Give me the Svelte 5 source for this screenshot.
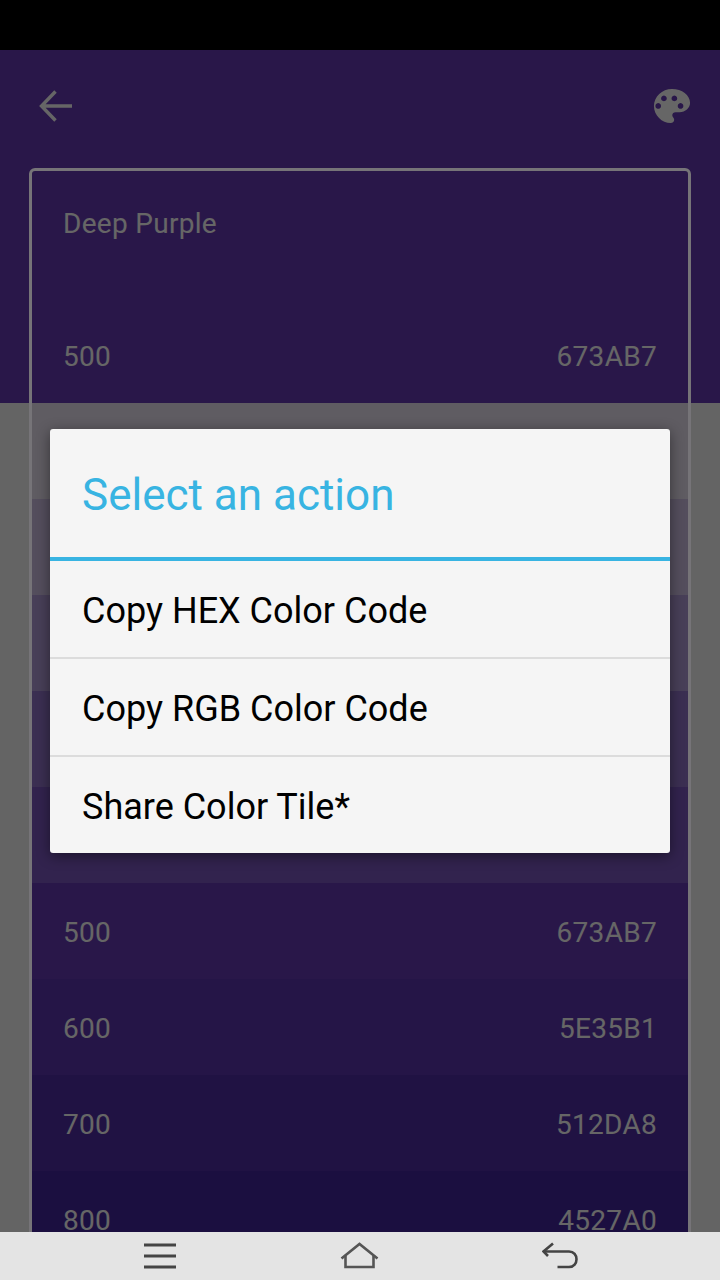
<script>
  const shades = [
    { name: "50", hex: "EDE7F6" },
    { name: "100", hex: "D1C4E9" },
    { name: "200", hex: "B39DDB" },
    { name: "300", hex: "9575CD" },
    { name: "400", hex: "7E57C2" },
    { name: "500", hex: "673AB7" },
    { name: "600", hex: "5E35B1" },
    { name: "700", hex: "512DA8" },
    { name: "800", hex: "4527A0" },
  ];

  const actions = ["Copy HEX Color Code", "Copy RGB Color Code", "Share Color Tile*"];
</script>

<div class="phone">
  <div class="status"></div>

  <main class="screen">
    <div class="page">
      <header class="hero">
        <div class="toolbar">
          <svg width="36" height="36" viewBox="0 0 36 36" fill="none" stroke="#fff" stroke-width="3.4">
            <path d="M35 18H4.500M18.500 3.500 4.500 18l14 14.500"></path>
          </svg>
          <svg width="38" height="38" viewBox="0 0 40 40">
            <path
              fill="#fff"
              fill-rule="evenodd"
              d="M20 2C9.500 2 1 10 1 20c0 10 8.500 18 17.500 18 2.500 0 3.800-1.700 3.800-3.500 0-1-.5-1.800-1-2.500-.5-.7-1-1.400-1-2.300 0-1.900 1.500-3.200 3.400-3.200h4.300C34 26.500 39 22 39 16.500 39 8.500 30.500 2 20 2ZM8.500 20a3 3 0 1 1 0-.01ZM14.500 12a3 3 0 1 1 0-.01ZM25.500 12a3 3 0 1 1 0-.01ZM32 20a3 3 0 1 1 0-.01Z"
            ></path>
          </svg>
        </div>
      </header>

      <section class="card">
        <div class="tile">
          <div class="tile-name">Deep Purple</div>
          <div class="line">
            <span>500</span>
            <span>673AB7</span>
          </div>
        </div>
        {#each shades as shade, i}
          <div class="line row" style="background: #{shade.hex}">
            <span>{i > 4 ? shade.name : ""}</span>
            <span>{i > 4 ? shade.hex : ""}</span>
          </div>
        {/each}
      </section>
    </div>

    <div class="scrim"></div>
    <div class="card-frame"></div>

    <div class="dialog">
      <h2 class="dialog-title">Select an action</h2>
      <div class="dialog-rule"></div>
      {#each actions as action}
        <div class="action">{action}</div>
      {/each}
    </div>
  </main>

  <nav class="navbar">
    <svg width="34" height="26" viewBox="0 0 34 26" fill="none" stroke="#444" stroke-width="3">
      <path d="M1 2h32M1 13h32M1 24h32"></path>
    </svg>
    <svg width="40" height="30" viewBox="0 0 40 30" fill="none" stroke="#555" stroke-width="2.600">
      <path d="M1.500 17.500 19.500 3l18 14.500"></path>
      <path d="M5.500 14.500v11.500h28V14.500"></path>
    </svg>
    <svg width="36" height="28" viewBox="0 0 36 28" fill="none" stroke="#444" stroke-width="2.600">
      <path d="M11 1.500 1.500 9.500 6 14"></path>
      <path d="M1.500 9.500H27c10 0 10 15.500 0 15.500H15.500"></path>
    </svg>
  </nav>
</div>

<style>
  :global(body) {
    margin: 0;
    background: #000;
  }

  .phone {
    width: 720px;
    height: 1280px;
    display: flex;
    flex-direction: column;
    font-family: Roboto, sans-serif;
    overflow: hidden;
  }

  .status {
    height: 50px;
    flex-shrink: 0;
    background: #000;
  }

  .screen {
    position: relative;
    flex: 1;
    min-height: 0;
    overflow: hidden;
  }

  .page {
    height: 100%;
    background: #fafafa;
  }

  .hero {
    height: 353px;
    background: #673ab7;
  }

  .toolbar {
    display: flex;
    justify-content: space-between;
    align-items: center;
    height: 112px;
    padding: 0 29px 0 37px;
  }

  .card {
    margin: -235px 31px 0;
    padding-top: 2px;
    color: #fff;
    font-size: 28px;
    letter-spacing: 0.3px;
  }

  .tile {
    height: 233px;
    display: flex;
    flex-direction: column;
    justify-content: space-between;
  }

  .tile-name {
    padding: 36px 32px 0;
    line-height: 36px;
  }

  .line {
    display: flex;
    justify-content: space-between;
    align-items: center;
    height: 94px;
    padding: 0 32px;
    box-sizing: border-box;
  }

  .row {
    height: 96px;
    padding-top: 2px;
  }

  .scrim {
    position: absolute;
    inset: 0;
    background: rgba(0, 0, 0, 0.6);
  }

  /* card outline reads brighter than the dimmed page, so it sits above the scrim */
  .card-frame {
    position: absolute;
    left: 29px;
    right: 29px;
    top: 118px;
    bottom: -10px;
    border: 3px solid #767478;
    border-radius: 6px;
  }

  .dialog {
    position: absolute;
    left: 50px;
    top: 379px;
    width: 620px;
    background: #f5f5f5;
    border-radius: 3px;
    box-shadow: 0 3px 14px rgba(0, 0, 0, 0.45);
  }

  .dialog-title {
    margin: 0;
    height: 128px;
    padding-left: 32px;
    line-height: 132px;
    font-size: 44px;
    font-weight: 400;
    color: #38b4e2;
  }

  .dialog-rule {
    height: 4px;
    background: #38b4e2;
  }

  .action {
    height: 96px;
    padding-left: 32px;
    line-height: 100px;
    font-size: 36px;
    color: #000;
    border-bottom: 2px solid #dcdcdc;
  }

  .action:last-child {
    border-bottom: 0;
  }

  .navbar {
    height: 48px;
    flex-shrink: 0;
    background: #e4e4e4;
    display: grid;
    grid-template-columns: repeat(3, 200px);
    justify-content: center;
    justify-items: center;
    align-items: center;
  }
</style>
